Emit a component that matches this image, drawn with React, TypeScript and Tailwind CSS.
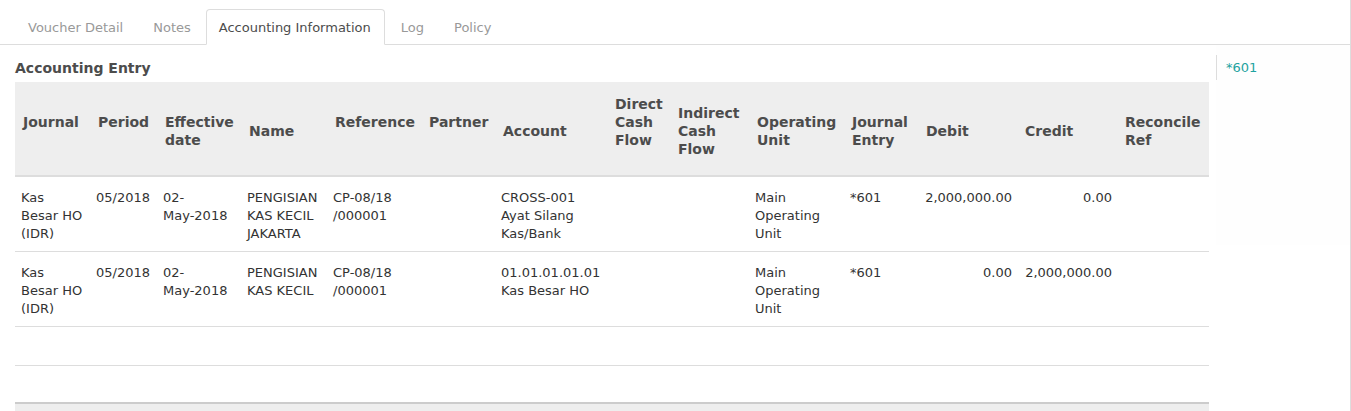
import React from 'react';

const tabs = ['Voucher Detail', 'Notes', 'Accounting Information', 'Log', 'Policy'];

// width, header lines, header sits one line higher
const columns: { w: number; label: string[]; up?: boolean }[] = [
  { w: 75, label: ['Journal'], up: true },
  { w: 67, label: ['Period'], up: true },
  { w: 84, label: ['Effective', 'date'] },
  { w: 86, label: ['Name'] },
  { w: 94, label: ['Reference'], up: true },
  { w: 74, label: ['Partner'], up: true },
  { w: 112, label: ['Account'] },
  { w: 63, label: ['Direct', 'Cash', 'Flow'], up: true },
  { w: 79, label: ['Indirect', 'Cash', 'Flow'] },
  { w: 95, label: ['Operating', 'Unit'] },
  { w: 74, label: ['Journal', 'Entry'] },
  { w: 99, label: ['Debit'] },
  { w: 100, label: ['Credit'] },
  { w: 92, label: ['Reconcile', 'Ref'] },
];

const rows: string[][][] = [
  [
    ['Kas', 'Besar HO', '(IDR)'],
    ['05/2018'],
    ['02-', 'May-2018'],
    ['PENGISIAN', 'KAS KECIL', 'JAKARTA'],
    ['CP-08/18', '/000001'],
    [],
    ['CROSS-001', 'Ayat Silang', 'Kas/Bank'],
    [],
    [],
    ['Main', 'Operating', 'Unit'],
    ['*601'],
    ['2,000,000.00'],
    ['0.00'],
    [],
  ],
  [
    ['Kas', 'Besar HO', '(IDR)'],
    ['05/2018'],
    ['02-', 'May-2018'],
    ['PENGISIAN', 'KAS KECIL'],
    ['CP-08/18', '/000001'],
    [],
    ['01.01.01.01.01', 'Kas Besar HO'],
    [],
    [],
    ['Main', 'Operating', 'Unit'],
    ['*601'],
    ['0.00'],
    ['2,000,000.00'],
    [],
  ],
];

const numeric = [11, 12];

export default function App() {
  return (
    <div className="w-[1351px] h-[411px] overflow-hidden bg-white border-r border-[#dddddd] font-['DejaVu_Sans',sans-serif] text-[13px] leading-[18px] text-[#333333]">
      {/* tabs */}
      <div className="flex pl-[14px] pt-[9px] border-b border-[#dddddd]">
        {tabs.map((t) => {
          const active = t === 'Accounting Information';
          return (
            <div
              key={t}
              className={
                active
                  ? 'pl-[12px] pr-[13px] pt-[9px] pb-[7px] mr-[2px] -ml-px -mb-px bg-white border border-[#dddddd] border-b-white rounded-t-[4px] text-[#4c4c4c]'
                  : 'px-[14px] pt-[10px] pb-[8px] mr-[2px] -mb-px text-[#999999]'
              }
            >
              {t}
            </div>
          );
        })}
      </div>

      <div className="flex">
        {/* main */}
        <div className="w-[1216px] pl-[15px] pr-[7px] pt-[14px]">
          <h3 className="font-bold text-[14px] text-[#4c4c4c] mb-[5px]">Accounting Entry</h3>
          <table className="table-fixed border-collapse w-[1194px]">
            <colgroup>
              {columns.map((c, i) => (
                <col key={i} style={{ width: c.w }} />
              ))}
            </colgroup>
            <thead>
              <tr className="bg-[#eeeeee]">
                {columns.map((c, i) => (
                  <th
                    key={i}
                    className={
                      'h-[94px] pl-[8px] pr-[0px] text-left align-middle font-bold text-[14px] text-[#4c4c4c] whitespace-nowrap border-b-2 border-[#dddddd] ' +
                      (c.up ? 'pt-[4px] pb-[18px]' : 'pt-[4px] pb-[0px]')
                    }
                  >
                    {c.label.map((l, j) => (
                      <div key={j}>{l}</div>
                    ))}
                  </th>
                ))}
              </tr>
            </thead>
            <tbody>
              {rows.map((r, i) => (
                <tr key={i}>
                  {r.map((cell, j) => (
                    <td
                      key={j}
                      className={
                        'pt-[12px] pb-[8px] pl-[6px] pr-[5px] align-top border-b border-[#dddddd] whitespace-nowrap ' +
                        (numeric.includes(j) ? 'text-right' : 'text-left')
                      }
                    >
                      {cell.map((l, k) => (
                        <div key={k}>{l}</div>
                      ))}
                    </td>
                  ))}
                </tr>
              ))}
              <tr>
                <td colSpan={14} className="h-[39px] border-b border-[#dddddd]"></td>
              </tr>
              <tr>
                <td colSpan={14} className="h-[37px]"></td>
              </tr>
            </tbody>
            <tfoot>
              <tr>
                <td colSpan={14} className="h-[30px] bg-[#eeeeee] border-t-2 border-[#cccccc]"></td>
              </tr>
            </tfoot>
          </table>
        </div>

        {/* sidebar */}
        <div className="flex-1 pt-[10px] bg-[#fefefe] h-[200px]">
          <div className="border-l border-[#dddddd] pl-[9px] h-[25px] flex items-center text-[#1fa3a0]">
            *601
          </div>
        </div>
      </div>
    </div>
  );
}
